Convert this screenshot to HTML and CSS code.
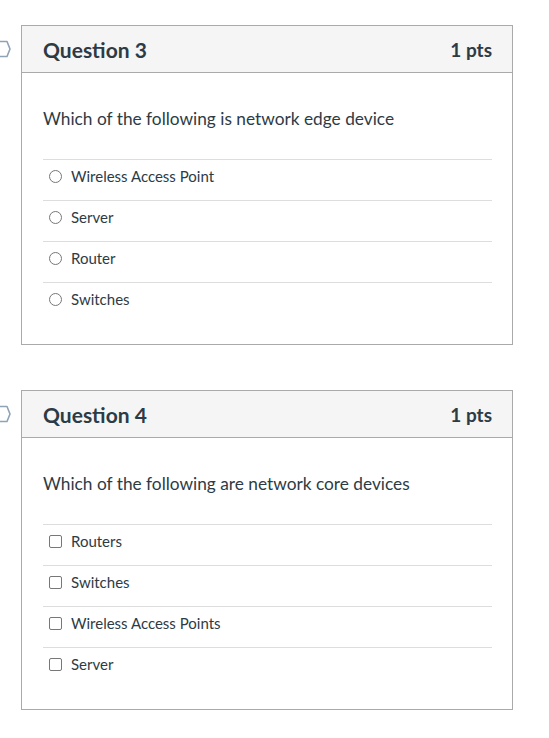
FILE: index.html
```html
<!DOCTYPE html>
<html lang="en">
<head>
<meta charset="utf-8">
<title>Quiz</title>
<link rel="stylesheet" href="styles.css">
</head>
<body>
<div class="page">
  <div class="question">
    <div class="flag">
      <svg width="21" height="20" viewBox="0 0 21 20"><path d="M-3 1.5 H7 L10 9 L7 16.5 H-3" fill="none" stroke="#8fa3b6" stroke-width="1.6" stroke-linejoin="round"/></svg>
    </div>
    <div class="card">
      <div class="card-header">
        <span class="title">Question 3</span>
        <span class="pts">1 pts</span>
      </div>
      <div class="card-body">
        <p class="prompt">Which of the following is network edge device</p>
        <ul class="answers">
          <li class="answer"><span class="radio"></span><span>Wireless Access Point</span></li>
          <li class="answer"><span class="radio"></span><span>Server</span></li>
          <li class="answer"><span class="radio"></span><span>Router</span></li>
          <li class="answer"><span class="radio"></span><span>Switches</span></li>
        </ul>
      </div>
    </div>
  </div>

  <div class="question">
    <div class="flag">
      <svg width="21" height="20" viewBox="0 0 21 20"><path d="M-3 1.5 H7 L10 9 L7 16.5 H-3" fill="none" stroke="#8fa3b6" stroke-width="1.6" stroke-linejoin="round"/></svg>
    </div>
    <div class="card">
      <div class="card-header">
        <span class="title">Question 4</span>
        <span class="pts">1 pts</span>
      </div>
      <div class="card-body">
        <p class="prompt">Which of the following are network core devices</p>
        <ul class="answers">
          <li class="answer"><span class="check"></span><span>Routers</span></li>
          <li class="answer"><span class="check"></span><span>Switches</span></li>
          <li class="answer"><span class="check"></span><span>Wireless Access Points</span></li>
          <li class="answer"><span class="check"></span><span>Server</span></li>
        </ul>
      </div>
    </div>
  </div>
</div>
</body>
</html>
```

FILE: styles.css
```css
* { box-sizing: border-box; }
html, body { margin: 0; padding: 0; background: #fff; }
body {
  font-family: Lato, "Open Sans", "Liberation Sans", sans-serif;
  color: #2d3b45;
}
.page {
  padding-top: 25px;
  display: flex;
  flex-direction: column;
  gap: 45px;
}
.question {
  display: flex;
  align-items: flex-start;
}
.flag {
  width: 21px;
  flex: 0 0 21px;
  padding-top: 15px;
  overflow: hidden;
}
.flag svg { display: block; overflow: visible; }
.card {
  width: 492px;
  border: 1px solid #aaaaaa;
  background: #fff;
}
.card-header {
  height: 47px;
  background: #f5f5f5;
  border-bottom: 1px solid #aaaaaa;
  display: flex;
  align-items: center;
  justify-content: space-between;
  padding: 0 20px 0 21px;
  font-weight: 700;
}
.title { font-size: 21px; }
.pts { font-size: 19px; }
.card-body {
  padding: 34px 20px 21px 21px;
}
.prompt {
  margin: 0 0 28px 0;
  font-size: 17.3px;
  line-height: 24px;
}
.answers {
  list-style: none;
  margin: 0;
  padding: 0;
}
.answer {
  border-top: 1px solid #dddddd;
  padding: 6px 0 14px 6px;
  font-size: 15px;
  line-height: 20px;
  display: flex;
  align-items: center;
  gap: 9px;
}
.radio, .check {
  width: 13px;
  height: 13px;
  flex: 0 0 13px;
  border: 1px solid #777;
  background: #fff;
}
.radio { border-radius: 50%; }
.check { border-radius: 2px; }
```
